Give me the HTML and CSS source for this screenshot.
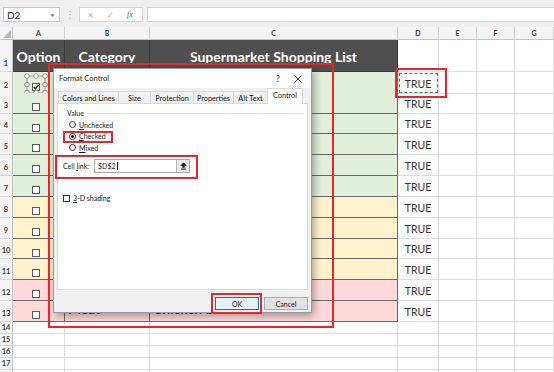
FILE: index.html
```html
<!DOCTYPE html>
<html lang="en">
<head>
    <meta charset="UTF-8">
    <title>Format Control - Cell link</title>
    <link rel="stylesheet" href="styles.css">
</head>
<body>
    <div class="topbar">
        <div class="namebox"><span>D2</span><span class="drop">&#9660;</span></div>
        <div class="sep">&#8942;</div>
        <div class="fbtns"><span class="fb">&#10005;</span><span class="fb">&#10003;</span><span class="fx">fx</span></div>
        <div class="finput"></div>
    </div>

    <div class="sheet">
        <div class="row colhead">
            <div class="corner"><svg width="8" height="8" viewBox="0 0 8 8"><polygon points="8,0 8,8 0,8" fill="#b9b9b9"/></svg></div>
            <div>A</div><div>B</div><div>C</div><div>D</div><div>E</div><div>F</div><div>G</div>
        </div>
        <div class="row r1">
            <div class="rh">1</div>
            <div class="hd">Option</div><div class="hd">Category</div><div class="hd">Supermarket Shopping List</div>
            <div></div><div></div><div></div><div></div>
        </div>
        <div class="row tr green">
            <div class="rh">2</div>
            <div class="t chk">
                <svg class="sel" width="40" height="21" viewBox="0 0 40 21">
                    <rect x="14" y="4" width="18" height="17" fill="none" stroke="#8a8a8a" stroke-width="0.8"/>
                    <rect x="19.5" y="11.5" width="7" height="7" fill="#fff" stroke="#555" stroke-width="1"/>
                    <path d="M20.8 15 L22.6 16.8 L25.4 13" fill="none" stroke="#222" stroke-width="1.3"/>
                    <circle cx="14" cy="4" r="2.3" fill="#fff" stroke="#777" stroke-width="0.8"/>
                    <circle cx="23" cy="4" r="2.3" fill="#fff" stroke="#777" stroke-width="0.8"/>
                    <circle cx="32" cy="4" r="2.3" fill="#fff" stroke="#777" stroke-width="0.8"/>
                    <circle cx="14" cy="12.5" r="2.3" fill="#fff" stroke="#777" stroke-width="0.8"/>
                    <circle cx="32" cy="12.5" r="2.3" fill="#fff" stroke="#777" stroke-width="0.8"/>
                    <circle cx="14" cy="20.5" r="2.3" fill="#fff" stroke="#777" stroke-width="0.8"/>
                    <circle cx="23" cy="20.5" r="2.3" fill="#fff" stroke="#777" stroke-width="0.8"/>
                    <circle cx="32" cy="20.5" r="2.3" fill="#fff" stroke="#777" stroke-width="0.8"/>
                </svg>
            </div>
            <div class="t"></div><div class="t"></div>
            <div class="val copy">TRUE</div><div></div><div></div><div></div>
        </div>
        <div class="row tr green">
            <div class="rh">3</div><div class="t chk"><span class="cb"></span></div><div class="t"></div><div class="t"></div>
            <div class="val">TRUE</div><div></div><div></div><div></div>
        </div>
        <div class="row tr green">
            <div class="rh">4</div><div class="t chk"><span class="cb"></span></div><div class="t"></div><div class="t"></div>
            <div class="val">TRUE</div><div></div><div></div><div></div>
        </div>
        <div class="row tr green">
            <div class="rh">5</div><div class="t chk"><span class="cb"></span></div><div class="t"></div><div class="t"></div>
            <div class="val">TRUE</div><div></div><div></div><div></div>
        </div>
        <div class="row tr green">
            <div class="rh">6</div><div class="t chk"><span class="cb"></span></div><div class="t"></div><div class="t"></div>
            <div class="val">TRUE</div><div></div><div></div><div></div>
        </div>
        <div class="row tr green">
            <div class="rh">7</div><div class="t chk"><span class="cb"></span></div><div class="t"></div><div class="t"></div>
            <div class="val">TRUE</div><div></div><div></div><div></div>
        </div>
        <div class="row tr yellow">
            <div class="rh">8</div><div class="t chk"><span class="cb"></span></div><div class="t"></div><div class="t"></div>
            <div class="val">TRUE</div><div></div><div></div><div></div>
        </div>
        <div class="row tr yellow">
            <div class="rh">9</div><div class="t chk"><span class="cb"></span></div><div class="t"></div><div class="t"></div>
            <div class="val">TRUE</div><div></div><div></div><div></div>
        </div>
        <div class="row tr yellow">
            <div class="rh">10</div><div class="t chk"><span class="cb"></span></div><div class="t"></div><div class="t"></div>
            <div class="val">TRUE</div><div></div><div></div><div></div>
        </div>
        <div class="row tr yellow">
            <div class="rh">11</div><div class="t chk"><span class="cb"></span></div><div class="t"></div><div class="t"></div>
            <div class="val">TRUE</div><div></div><div></div><div></div>
        </div>
        <div class="row tr pink">
            <div class="rh">12</div><div class="t chk"><span class="cb"></span></div><div class="t"></div><div class="t"></div>
            <div class="val">TRUE</div><div></div><div></div><div></div>
        </div>
        <div class="row tr pink">
            <div class="rh">13</div><div class="t chk"><span class="cb"></span></div><div class="t txt">Meat</div><div class="t txt">Chicken breast</div>
            <div class="val">TRUE</div><div></div><div></div><div></div>
        </div>
        <div class="row sm"><div class="rh">14</div><div></div><div></div><div></div><div></div><div></div><div></div><div></div></div>
        <div class="row sm"><div class="rh">15</div><div></div><div></div><div></div><div></div><div></div><div></div><div></div></div>
        <div class="row sm"><div class="rh">16</div><div></div><div></div><div></div><div></div><div></div><div></div><div></div></div>
        <div class="row sm"><div class="rh">17</div><div></div><div></div><div></div><div></div><div></div><div></div><div></div></div>
        <div class="row sm"><div class="rh"></div><div></div><div></div><div></div><div></div><div></div><div></div><div></div></div>
    </div>

    <!-- Format Control dialog -->
    <div class="dialog">
        <div class="dlg-title">
            <span>Format Control</span>
            <span class="dlg-help">?</span>
            <span class="dlg-close"><svg width="8" height="8" viewBox="0 0 8 8"><path d="M0.5 0.5 L7.5 7.5 M7.5 0.5 L0.5 7.5" stroke="#222" stroke-width="0.9"/></svg></span>
        </div>
        <div class="tabs">
            <div class="tab w1">Colors and Lines</div>
            <div class="tab w2">Size</div>
            <div class="tab w3">Protection</div>
            <div class="tab w4">Properties</div>
            <div class="tab w5">Alt Text</div>
            <div class="tab w6 active">Control</div>
        </div>
        <div class="panel">
            <div class="group-title">Value</div>
            <div class="radios">
                <div class="opt"><span class="radio"></span><span><u>U</u>nchecked</span></div>
                <div class="opt"><span class="radio on"></span><span><u>C</u>hecked</span></div>
                <div class="opt"><span class="radio"></span><span><u>M</u>ixed</span></div>
            </div>
            <div class="link-row">
                <span class="link-label">Cell <u>l</u>ink:</span>
                <div class="link-input">
                    <span class="link-text">$D$2<span class="caret"></span></span>
                    <span class="collapse">
                        <svg width="7" height="8" viewBox="0 0 7 8"><polygon points="3.5,0.5 6.8,3.8 4.6,3.8 4.6,5.8 2.4,5.8 2.4,3.8 0.2,3.8" fill="#111"/><rect x="1" y="6.6" width="5" height="1" fill="#111"/></svg>
                    </span>
                </div>
            </div>
            <div class="shade-row"><span class="box"></span><span><u>3</u>-D shading</span></div>
        </div>
        <div class="dlg-foot">
            <button class="btn ok">OK</button>
            <button class="btn">Cancel</button>
        </div>
    </div>

    <!-- red annotation frames -->
    <div class="mark m-dialog"></div>
    <div class="mark m-d2"></div>
    <div class="mark m-checked"></div>
    <div class="mark m-link"></div>
    <div class="mark m-ok"></div>
</body>
</html>
```

FILE: styles.css
```css
* {
    margin: 0;
    padding: 0;
    box-sizing: border-box;
}

body {
    width: 554px;
    height: 372px;
    overflow: hidden;
    position: relative;
    background: #fff;
    font-family: Lato, "Liberation Sans", sans-serif;
    color: #222;
}

/* Barra de fórmulas */
.topbar {
    height: 27px;
    background: #efefef;
    display: flex;
    align-items: flex-start;
    padding: 7px 0 0 3px;
}

.namebox {
    width: 57px;
    height: 15px;
    background: #fff;
    border: 1px solid #c8c8c8;
    display: flex;
    align-items: center;
    justify-content: space-between;
    padding: 0 4px 0 3px;
    font-size: 10px;
}

.namebox .drop {
    font-size: 5px;
    color: #666;
}

.sep {
    width: 19px;
    text-align: center;
    color: #bdbdbd;
    font-size: 10px;
    line-height: 15px;
}

.fbtns {
    width: 64px;
    height: 15px;
    background: #fff;
    border: 1px solid #d6d6d6;
    display: flex;
    align-items: center;
    padding-left: 7px;
    gap: 13px;
}

.fb {
    font-size: 8px;
    color: #b4b4b4;
}

.fx {
    font-family: "Liberation Serif", serif;
    font-style: italic;
    font-size: 8px;
    color: #555;
}

.finput {
    flex: 1;
    height: 15px;
    margin-left: 4px;
    background: #fff;
    border: 1px solid #d6d6d6;
    border-right: none;
}

/* Hoja */
.row {
    display: grid;
    grid-template-columns: 13px 52px 85px 248px 41px 38px 38px 39px;
    height: 20.83px;
}

.row > div {
    border-right: 1px solid #dcdcdc;
    border-bottom: 1px solid #dcdcdc;
}

.row.colhead {
    height: 13px;
}

.colhead > div {
    background: #f3f3f3;
    border-right-color: #d2d2d2;
    border-bottom-color: #c4c4c4;
    font-size: 7px;
    font-weight: 700;
    color: #444;
    display: flex;
    align-items: center;
    justify-content: center;
}

.colhead > .corner {
    align-items: flex-end;
    justify-content: flex-end;
    padding: 0 1px 1px 0;
    border-right-color: #c4c4c4;
}

.row > .rh {
    background: #f3f3f3;
    border-right-color: #c4c4c4;
    border-bottom-color: #d6d6d6;
    font-size: 7.5px;
    font-weight: 700;
    color: #444;
    display: flex;
    align-items: flex-end;
    justify-content: center;
    padding-bottom: 3px;
}

.row.r1 {
    height: 32px;
}

.r1 > .hd {
    background: #4f4f4f;
    border-right-color: #3c3c3c;
    border-bottom-color: #3c3c3c;
    color: #fff;
    font-weight: 700;
    font-size: 14px;
    display: flex;
    align-items: center;
    justify-content: center;
    padding-top: 1px;
    white-space: nowrap;
}

.row > .t {
    border-right-color: #6a6a6a;
    border-bottom-color: #6a6a6a;
}

.green > .t { background: #e2efda; }
.yellow > .t { background: #fff2cc; }
.pink > .t { background: #ffd9d9; }

.chk {
    display: flex;
    align-items: flex-start;
    padding: 10px 0 0 19px;
}

.row > .chk:has(.sel) {
    padding: 0;
}

.cb {
    width: 8px;
    height: 8px;
    background: #fff;
    border: 1px solid #5a5a5a;
}

.txt {
    font-size: 14px;
    line-height: 16px;
    padding: 0 0 0 3px;
    white-space: nowrap;
    overflow: hidden;
}

.val {
    font-size: 10.5px;
    color: #333;
    display: flex;
    align-items: flex-end;
    justify-content: center;
    padding-bottom: 3px;
}

.row > .copy {
    outline: 1.5px dashed #2b8a4e;
    outline-offset: -2px;
}

.row.sm {
    height: 12px;
}

.sm > .rh {
    padding-bottom: 1px;
}

/* Diálogo */
.dialog {
    position: absolute;
    left: 53px;
    top: 68px;
    width: 259px;
    height: 245px;
    background: #f0f0f0;
    border: 1px solid #9c9c9c;
    box-shadow: 2px 3px 8px rgba(0, 0, 0, 0.35);
    display: flex;
    flex-direction: column;
    font-size: 7px;
    color: #1a1a1a;
}

.dlg-title {
    height: 19px;
    background: #fff;
    display: flex;
    align-items: center;
    padding-left: 5px;
    font-size: 7.5px;
}

.dlg-help {
    margin-left: auto;
    width: 14px;
    text-align: center;
    font-size: 8.5px;
}

.dlg-close {
    width: 26px;
    display: flex;
    justify-content: center;
}

.tabs {
    display: flex;
    align-items: flex-end;
    height: 16px;
    padding-left: 4px;
    margin-bottom: -1px;
}

.tab {
    height: 13px;
    border: 1px solid #d9d9d9;
    border-bottom: none;
    margin-left: -1px;
    background: #f0f0f0;
    display: flex;
    align-items: center;
    justify-content: center;
    white-space: nowrap;
    font-size: 7.3px;
}

.tab.w1 { width: 61px; margin-left: 0; }
.tab.w2 { width: 33px; }
.tab.w3 { width: 44px; }
.tab.w4 { width: 41px; }
.tab.w5 { width: 35px; }
.tab.w6 { width: 36px; }

.tab.active {
    height: 16px;
    background: #fff;
    position: relative;
    z-index: 1;
    padding-bottom: 2px;
}

.panel {
    height: 187px;
    margin: 0 3px;
    background: #fff;
    border: 1px solid #d9d9d9;
}

.group-title {
    display: flex;
    align-items: center;
    gap: 3px;
    height: 10px;
    margin: 4px 3px 0 9px;
}

.group-title::after {
    content: '';
    flex: 1;
    border-top: 1px solid #dcdcdc;
}

.radios {
    margin-top: 1px;
}

.opt {
    height: 11.5px;
    display: flex;
    align-items: center;
    gap: 3px;
    padding-left: 11px;
}

.radio {
    width: 7px;
    height: 7px;
    border: 1px solid #333;
    border-radius: 50%;
    background: #fff;
    display: flex;
    align-items: center;
    justify-content: center;
}

.radio.on::after {
    content: '';
    width: 3px;
    height: 3px;
    border-radius: 50%;
    background: #111;
}

.link-row {
    display: flex;
    align-items: center;
    height: 14px;
    margin-top: 5.5px;
    padding-left: 5px;
}

.link-label {
    width: 31px;
}

.link-input {
    width: 96px;
    height: 14px;
    border: 1px solid #a8a8a8;
    display: flex;
    align-items: center;
}

.link-text {
    flex: 1;
    padding-left: 3px;
    display: flex;
    align-items: center;
}

.caret {
    width: 1px;
    height: 8px;
    background: #111;
    margin-left: 1px;
}

.collapse {
    width: 13px;
    height: 12px;
    border-left: 1px solid #b5b5b5;
    background: #ececec;
    display: flex;
    align-items: center;
    justify-content: center;
}

.shade-row {
    display: flex;
    align-items: center;
    gap: 3px;
    height: 10px;
    margin-top: 20px;
    padding-left: 5px;
}

.box {
    width: 7px;
    height: 7px;
    border: 1px solid #333;
    background: #fff;
}

.dlg-foot {
    display: flex;
    justify-content: flex-end;
    gap: 5px;
    padding: 7px 3px 0 0;
}

.btn {
    width: 44px;
    height: 13px;
    font-family: inherit;
    font-size: 7px;
    color: #1a1a1a;
    background: #e1e1e1;
    border: 1px solid #adadad;
}

.btn.ok {
    background: #e5f1fb;
    border-color: #0078d7;
}

/* Marcos rojos */
.mark {
    position: absolute;
    border: 2px solid #e8262b;
    pointer-events: none;
}

.m-dialog { left: 48px; top: 63px; width: 286px; height: 265px; }
.m-d2 { left: 395px; top: 68px; width: 52px; height: 30px; }
.m-checked { left: 63px; top: 131px; width: 50px; height: 12px; }
.m-link { left: 55px; top: 155px; width: 143px; height: 24px; }
.m-ok { left: 211px; top: 293px; width: 51px; height: 21px; }
```
